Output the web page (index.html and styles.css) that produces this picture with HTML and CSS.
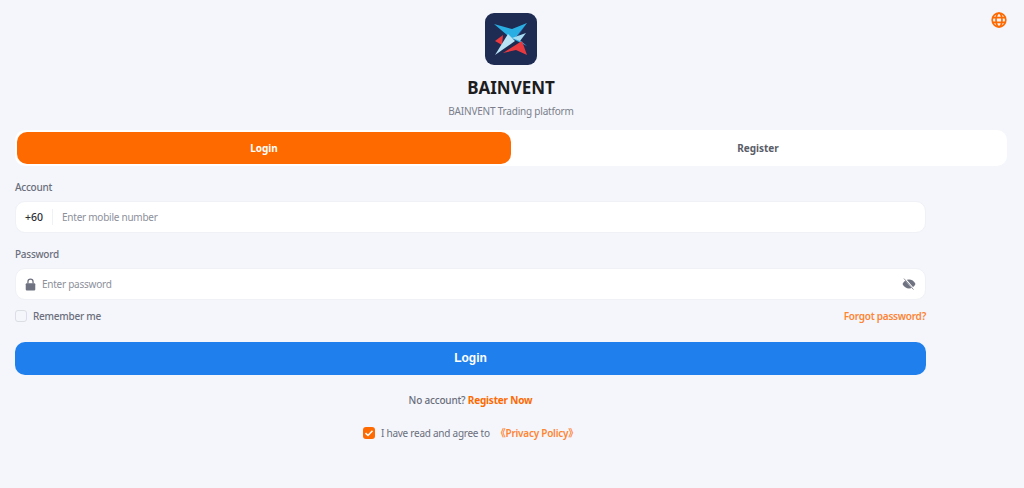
FILE: index.html
```html
<!DOCTYPE html>
<html lang="en">
<head>
  <meta charset="UTF-8">
  <title>BAINVENT</title>
  <link rel="stylesheet" href="styles.css">
</head>
<body>
  <a class="lang" href="#" aria-label="Language">
    <svg viewBox="0 0 16 16" width="16" height="16" fill="none" stroke="#ff6a00" stroke-width="1.7">
      <circle cx="8" cy="8" r="6.8"/>
      <ellipse cx="8" cy="8" rx="3" ry="6.8"/>
      <path d="M1.6 5.7h12.8M1.6 10.300h12.8"/>
    </svg>
  </a>

  <header class="brand">
    <div class="logo">
      <svg viewBox="0 0 52 52" width="52" height="52">
        <rect width="52" height="52" rx="9" fill="#1e2b52"/>
        <path d="M42 10 L25 20 L32 25 Z" fill="#2d4a86"/>
        <path d="M9 11 L27 16 L42 10 L31 24 L42 33 L26 25 L22 22 Z" fill="#29aee3"/>
        <path d="M41 20 L27 25 L35 28 Z" fill="#a5dcf2"/>
        <path d="M10 28 L18 22 L17 32 Z" fill="#e8393f"/>
        <path d="M23 21 L30 28 L10 42 Z" fill="#b8e2f5"/>
        <path d="M18 40 L37 28 L42 42 L31 37 Z" fill="#e8393f"/>
      </svg>
    </div>
    <h1 class="brand-name">BAINVENT</h1>
    <p class="brand-sub">BAINVENT Trading platform</p>
  </header>

  <nav class="tabs">
    <button class="tab tab-active" type="button">Login</button>
    <button class="tab" type="button">Register</button>
  </nav>

  <form class="login-form">
    <label class="field-label">Account</label>
    <div class="input-box">
      <span class="prefix">+60</span>
      <input type="text" placeholder="Enter mobile number">
    </div>

    <label class="field-label label-password">Password</label>
    <div class="input-box">
      <svg class="lock" viewBox="0 0 12 14" width="11" height="13" fill="#6f7280">
        <path d="M2.5 6V4a3.5 3.5 0 0 1 7 0v2h-1.4V4a2.1 2.1 0 0 0-4.2 0v2z"/>
        <rect x="0.8" y="5.6" width="10.4" height="8" rx="1.2"/>
      </svg>
      <input type="password" placeholder="Enter password">
      <svg class="eye" viewBox="0 0 14 12" width="14" height="12">
        <path d="M0.5 6C2 3 4.300 1.600 7 1.600S12 3 13.500 6C12 9 9.700 10.400 7 10.400S2 9 0.500 6Z" fill="#6f7280"/>
        <path d="M2.500 0.500L12 11.500" stroke="#fff" stroke-width="1.800"/>
        <path d="M2 0.600L11.500 11.600" stroke="#6f7280" stroke-width="0.800"/>
      </svg>
    </div>

    <div class="row-between">
      <label class="remember"><span class="check-empty"></span>Remember me</label>
      <a class="link forgot" href="#">Forgot password?</a>
    </div>

    <button class="submit" type="button">Login</button>

    <p class="no-account">No account? <a class="link" href="#">Register Now</a></p>

    <div class="agree">
      <span class="check-on">
        <svg viewBox="0 0 12 12" width="12" height="12" fill="none" stroke="#fff" stroke-width="1.600"><path d="M2.500 6.200L5 8.500L9.500 3.800"/></svg>
      </span>
      <span>I have read and agree to</span>
      <a class="link policy" href="#">《Privacy Policy》</a>
    </div>
  </form>
</body>
</html>
```

FILE: styles.css
```css
* {
  box-sizing: border-box;
}
body {
  margin: 0;
  height: 488px;
  overflow: hidden;
  padding: 13px 17px 0 15px;
  background: #f4f6fb;
  font-family: "Noto Sans", "Noto Sans CJK SC", sans-serif;
  font-size: 10px;
  letter-spacing: -0.25px;
  color: #6b6e7b;
  position: relative;
}
.lang {
  position: absolute;
  top: 12px;
  right: 17px;
  display: flex;
}
.brand {
  display: flex;
  flex-direction: column;
  align-items: center;
}
.logo {
  display: flex;
  width: 52px;
  height: 52px;
}
.brand-name {
  margin: 11px 0 0;
  font-size: 17px;
  line-height: 24px;
  font-weight: 700;
  letter-spacing: 0;
  color: #1d1d1f;
}
.brand-sub {
  margin: 3px 0 0;
  line-height: 16px;
  letter-spacing: -0.2px;
  color: #7b7e8a;
}
.tabs {
  display: flex;
  margin-top: 11px;
  padding: 2px;
  height: 36px;
  background: #fff;
  border-radius: 10px;
}
.tab {
  flex: 1;
  border: 0;
  background: none;
  border-radius: 10px;
  font-family: inherit;
  font-size: 10px;
  font-weight: 700;
  color: #5a5d68;
}
.tab-active {
  background: #ff6a00;
  color: #fff;
}
.login-form {
  width: 911px;
}
.field-label {
  display: block;
  margin-top: 13px;
  line-height: 16px;
  font-weight: 500;
  color: #6b6e7b;
}
.input-box {
  display: flex;
  align-items: center;
  height: 32px;
  margin-top: 6px;
  padding: 0 9px;
  background: #fff;
  border: 1px solid #eff1f6;
  border-radius: 10px;
}
.input-box input {
  flex: 1;
  min-width: 0;
  border: 0;
  padding: 0;
  outline: none;
  background: none;
  font-family: inherit;
  font-size: 10px;
  letter-spacing: -0.25px;
}
.input-box input::placeholder {
  color: #8d909b;
}
.prefix {
  padding-right: 9px;
  margin-right: 9px;
  border-right: 1px solid #f0f1f5;
  font-size: 10.500px;
  line-height: 16px;
  font-weight: 500;
  letter-spacing: 0;
  color: #2a2c33;
}
.lock {
  margin-right: 6px;
}
.row-between {
  display: flex;
  justify-content: space-between;
  align-items: center;
  height: 16px;
  margin-top: 8px;
}
.remember {
  display: flex;
  align-items: center;
  gap: 6px;
  font-weight: 500;
}
.check-empty {
  width: 12px;
  height: 12px;
  border: 1px solid #dcdee6;
  border-radius: 3px;
}
.link {
  color: #ff6a00;
  font-weight: 700;
  text-decoration: none;
}
.forgot {
  font-weight: 600;
  color: #ff8433;
}
.submit {
  display: block;
  width: 100%;
  height: 33px;
  margin-top: 18px;
  padding: 0 0 1px;
  border: 0;
  border-radius: 10px;
  background: #1f7fec;
  color: #fff;
  font-family: "Liberation Sans", sans-serif;
  font-size: 12px;
  font-weight: 700;
}
.no-account {
  margin: 17px 0 0;
  text-align: center;
  line-height: 16px;
  font-weight: 500;
  letter-spacing: -0.2px;
}
.agree {
  display: flex;
  justify-content: center;
  align-items: center;
  gap: 6px;
  margin-top: 17px;
  line-height: 16px;
}
.check-on {
  display: flex;
  width: 12px;
  height: 12px;
  background: #ff6a00;
  border-radius: 3px;
}
.policy {
  font-weight: 600;
  color: #ff8433;
}
```
